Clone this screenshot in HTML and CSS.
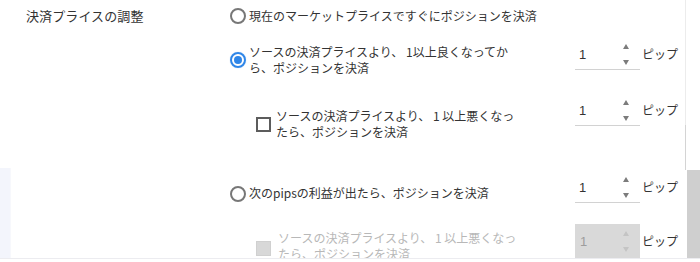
FILE: index.html
```html
<!DOCTYPE html>
<html lang="ja">
<head>
<meta charset="utf-8">
<link rel="stylesheet" href="styles.css">
</head>
<body>
<div class="page">
  <div class="panel">
    <div class="label-col">
      <div class="section-label">決済プライスの調整</div>
      <div class="side-strip"></div>
    </div>
    <div class="options">
      <div class="row row-a">
        <label class="option">
          <span class="radio"></span>
          <span class="opt-text">現在のマーケットプライスですぐにポジションを決済</span>
        </label>
      </div>

      <div class="row row-b">
        <label class="option option-top">
          <span class="radio checked"></span>
          <span class="opt-text">ソースの決済プライスより、 1以上良くなってか<br>ら、ポジションを決済</span>
        </label>
        <div class="spin"><span class="spin-val">1</span><span class="arrows"><span class="up"></span><span class="down"></span></span></div>
        <span class="unit">ピップ</span>
      </div>

      <div class="row row-c">
        <label class="option option-sub">
          <span class="check"></span>
          <span class="opt-text">ソースの決済プライスより、 1 以上悪くなっ<br>たら、ポジションを決済</span>
        </label>
        <div class="spin"><span class="spin-val">1</span><span class="arrows"><span class="up"></span><span class="down"></span></span></div>
        <span class="unit">ピップ</span>
      </div>

      <div class="row row-d">
        <label class="option option-d">
          <span class="radio"></span>
          <span class="opt-text">次のpipsの利益が出たら、ポジションを決済</span>
        </label>
        <div class="spin"><span class="spin-val">1</span><span class="arrows"><span class="up"></span><span class="down"></span></span></div>
        <span class="unit">ピップ</span>
      </div>

      <div class="row row-e">
        <label class="option option-sub option-e disabled">
          <span class="check"></span>
          <span class="opt-text">ソースの決済プライスより、 1 以上悪くなっ<br>たら、ポジションを決済</span>
        </label>
        <div class="spin spin-disabled"><span class="spin-val">1</span><span class="arrows"><span class="up"></span><span class="down"></span></span></div>
        <span class="unit">ピップ</span>
      </div>
    </div>
    <div class="scrollbar">
      <div class="sb-top"></div>
      <div class="sb-mid"></div>
      <div class="sb-thumb"></div>
    </div>
  </div>
</div>
</body>
</html>
```
FILE: styles.css
```css
* { box-sizing: border-box; }
html, body {
  margin: 0;
  padding: 0;
  background: #ffffff;
}
body {
  font-family: "Noto Sans CJK JP", "Liberation Sans", sans-serif;
  color: #333333;
  font-size: 12px;
}
.page {
  width: 700px;
  height: 262px;
  overflow: hidden;
}
.panel {
  display: flex;
  height: 259px;
  border-bottom: 1px solid #ececf0;
  overflow: hidden;
}
.label-col {
  width: 229px;
  flex: none;
  display: flex;
  flex-direction: column;
}
.section-label {
  padding-left: 26px;
  margin-top: 6px;
  font-size: 13px;
  line-height: 20px;
  color: #333;
  letter-spacing: 0.1px;
}
.side-strip {
  margin-top: 142px;
  width: 11px;
  flex: 1;
  background: #f3f5fc;
  border-right: 1px solid #f7f8fc;
}
.options {
  width: 456px;
  flex: none;
}
.row {
  display: flex;
  align-items: flex-start;
}
.row-a { margin-top: 4px; height: 24px; align-items: center; }
.row-b { margin-top: 12px; }
.row-c { margin-top: 20px; }
.row-d { margin-top: 33px; }
.row-e { margin-top: 21px; }

.option {
  display: flex;
  align-items: center;
  width: 346px;
  flex: none;
  padding-left: 1px;
}
.option-top { padding-top: 4px; }
.option-sub { margin-left: 26px; width: 320px; padding-top: 12px; }
.option-d { padding-top: 10px; }
.option-e { padding-top: 6px; }
.opt-text {
  white-space: nowrap;
  line-height: 16px;
  font-size: 12px;
  color: #333;
}
.option-sub .opt-text { margin-left: 5px; }
.option-e .opt-text { margin-left: 7px; }
.disabled .opt-text { color: #b8b8b8; }

.radio {
  width: 16px;
  height: 16px;
  border-radius: 50%;
  border: 2px solid #777777;
  flex: none;
  margin-right: 3px;
  position: relative;
}
.option-d .radio { margin-top: 3px; }
.radio.checked {
  border-color: #2f86e8;
  box-shadow: 0 0 1px #9cc7f4;
}
.radio.checked::after {
  content: "";
  position: absolute;
  left: 2px;
  top: 2px;
  width: 8px;
  height: 8px;
  border-radius: 50%;
  background: #2f86e8;
}
.check {
  width: 15px;
  height: 15px;
  border: 2px solid #5c5c5c;
  flex: none;
}
.disabled .check {
  border: 1px solid #d0d0d0;
  background: #d8d8d8;
  margin-top: 4px;
}

.spin {
  width: 65px;
  height: 30px;
  flex: none;
  display: flex;
  align-items: center;
  border-bottom: 1px solid #d2d2d2;
}
.spin-val {
  flex: 1;
  padding-left: 4px;
  font-family: "Liberation Sans", sans-serif;
  font-size: 13px;
  color: #333;
}
.arrows {
  width: 14px;
  margin-right: 7px;
  display: flex;
  flex-direction: column;
  align-items: center;
  gap: 11px;
}
.up, .down {
  width: 0;
  height: 0;
  border-left: 3.5px solid transparent;
  border-right: 3.5px solid transparent;
}
.up { border-bottom: 5px solid #7c7c7c; }
.down { border-top: 5px solid #7c7c7c; }
.spin-disabled {
  background: #d9d9d9;
  border-bottom: none;
  height: 34px;
}
.spin-disabled .spin-val { color: #9d9d9d; padding-left: 5px; }
.spin-disabled .up { border-bottom-color: #c4c4c4; }
.spin-disabled .down { border-top-color: #c4c4c4; }

.unit {
  margin-left: 2px;
  margin-top: 6px;
  font-size: 12px;
  line-height: 16px;
  color: #333;
}
.row-e .unit { margin-top: 9px; }

.scrollbar {
  width: 15px;
  flex: none;
  display: flex;
  flex-direction: column;
}
.sb-top {
  height: 125px;
  border-left: 1px solid #ececec;
}
.sb-mid {
  height: 45px;
  border-left: 1px solid #d4d4d4;
}
.sb-thumb {
  flex: 1;
  margin-left: 2px;
  background: #cfcfcf;
}
```
